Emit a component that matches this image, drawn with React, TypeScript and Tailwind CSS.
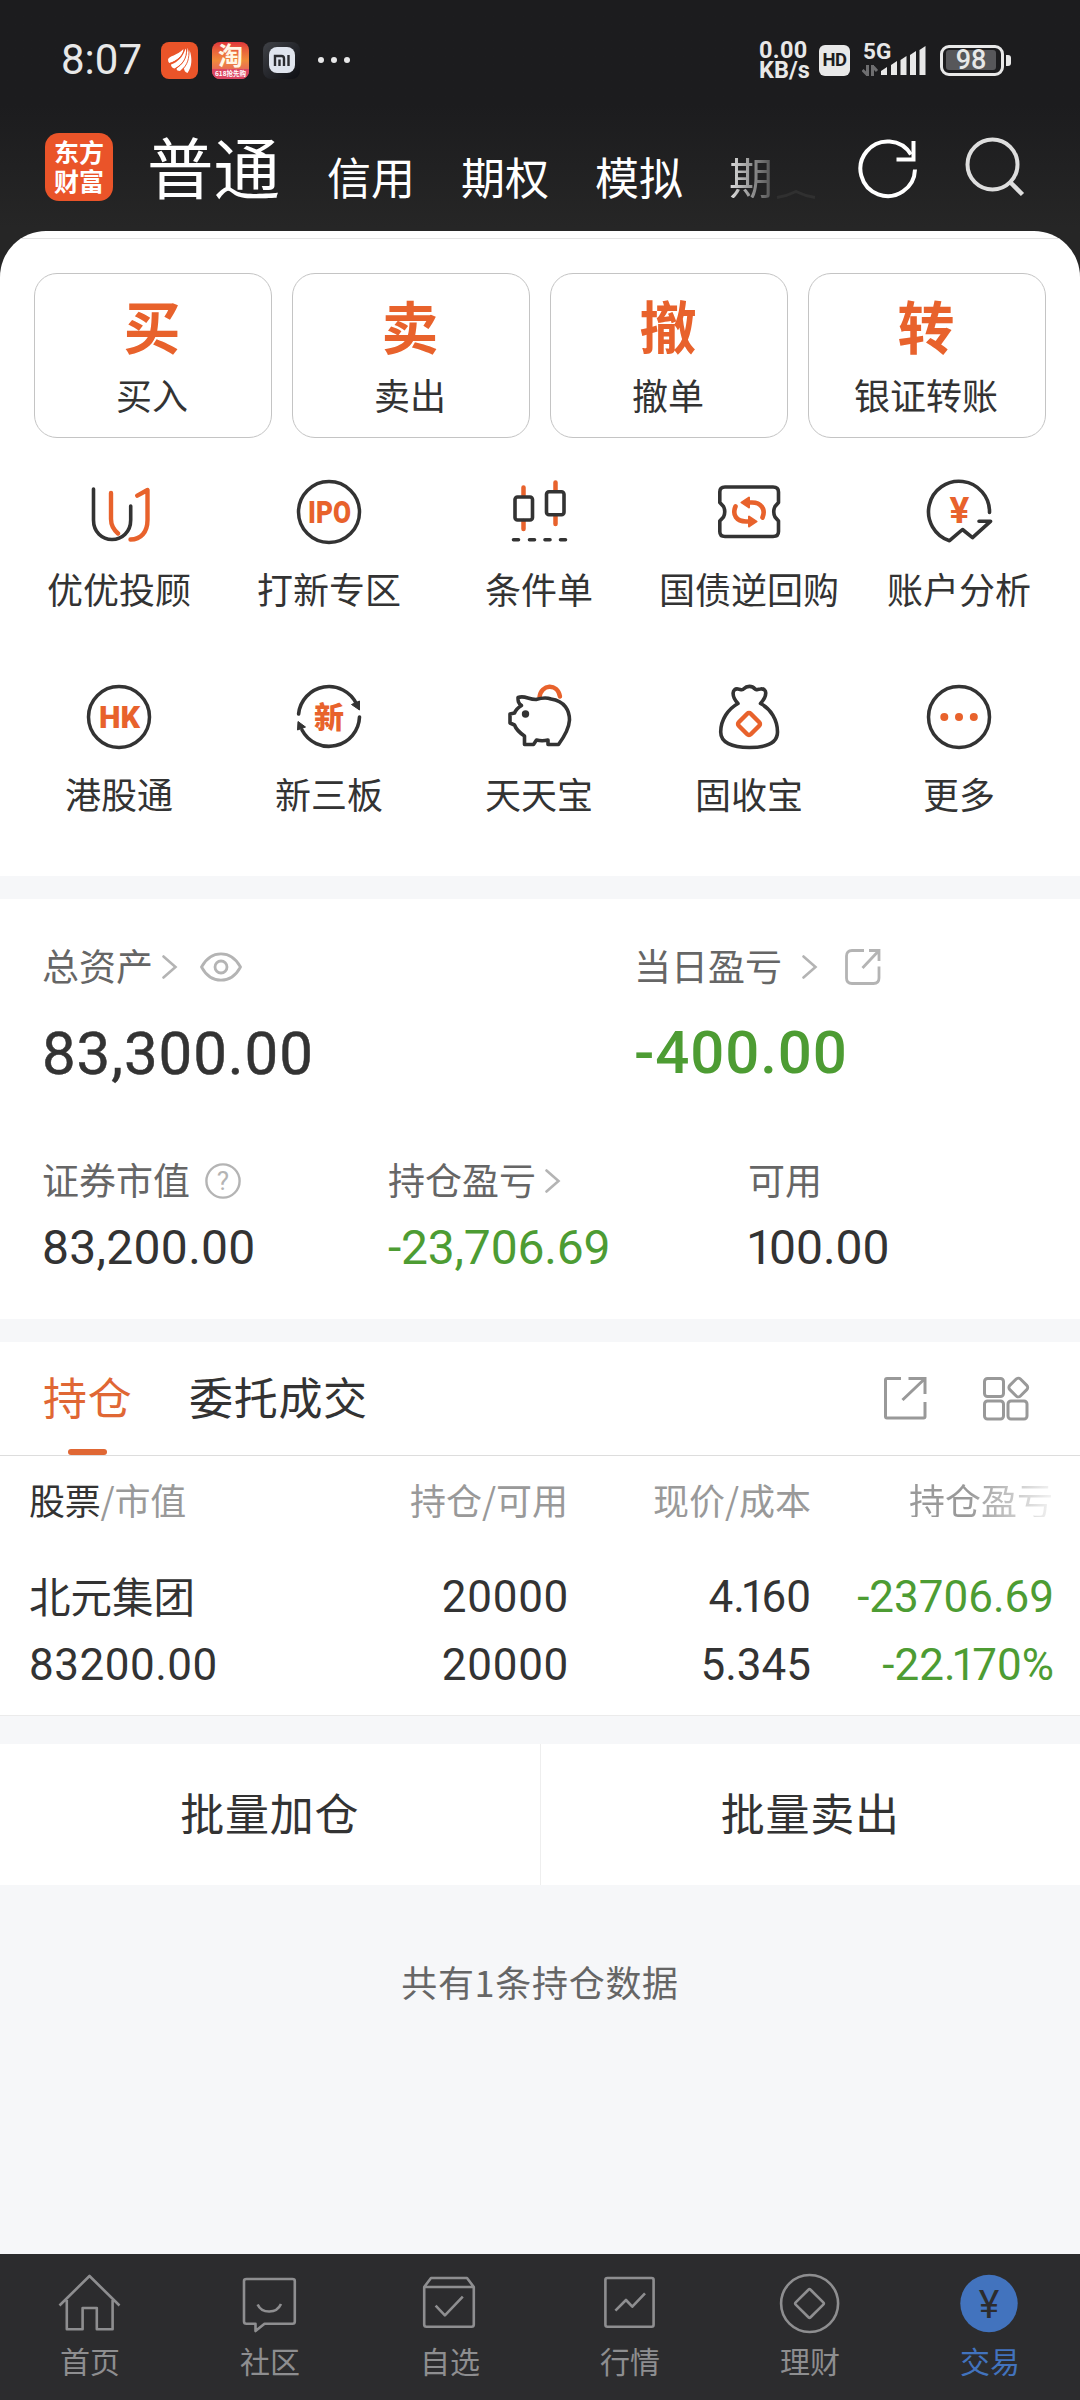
import type { ReactNode } from "react";

const CJK = "font-['Noto_Sans_CJK_SC',sans-serif]";
const NUM = "font-[Roboto,sans-serif]";

const DARK = "#333333";
const ORANGE = "#e8622c";

function StatusBar() {
  return (
    <div className="flex h-[120px] items-center pl-[61px] pr-[69px] text-[#e8e8e8]">
      <span className={`${NUM} w-[100px] text-[42px] leading-[42px]`}>8:07</span>
      <svg className="mr-[14px] h-[37px] w-[37px]" viewBox="0 0 37 37">
        <rect width="37" height="37" rx="8" fill="#ea5429" />
        <path d="M7 17.500C8 14 16 13.500 22.500 7C23 13 15 19.500 8.500 21Q7 20 7 17.500Z" fill="#fff" />
        <path d="M10 22.500C17 20 22 15 24.500 6.500C27.500 12 23 22 13.500 26.500Q10 25.500 10 22.500Z" fill="#fff" />
        <path d="M15.500 26.500C22 22 26 16 26.500 6C31 13 28 23 19 29Q15.500 29 15.500 26.500Z" fill="#fff" />
        <path d="M23 26C26 22 28.500 17 28.500 8C31.500 16 31 25 26.500 31Q23 30 23 26Z" fill="#fff" />
        <path d="M8.500 21.600C16 19 21 15 23.500 7M14 27C22 22 25.500 17 25.700 7M19.500 29C27 23 28.500 16 27.700 7" stroke="#ea5429" strokeWidth="0.900" fill="none" />
      </svg>
      <div className="mr-[14px] flex h-[37px] w-[37px] flex-col overflow-hidden rounded-[8px] bg-linear-to-b from-[#e0353a] via-[#f08a3a] to-[#dc4763]">
        <span className={`${CJK} h-[27px] text-center text-[25px] font-bold leading-[25px] text-[#fff6e6]`}>淘</span>
        <span className={`${CJK} h-[10px] whitespace-nowrap bg-[#dc4763] text-center text-[6.500px] font-bold leading-[9px] text-white`}>
          618抢先购
        </span>
      </div>
      <div className="mr-[18px] flex h-[37px] w-[37px] items-center justify-center rounded-[8px] bg-linear-to-br from-[#404247] to-[#0e0f14]">
        <svg className="h-[26px] w-[26px]" viewBox="0 0 26 26">
          <rect width="26" height="26" rx="8" fill="#dfe4ee" />
          <path d="M6 19V9h6.500a2.500 2.500 0 0 1 2.500 2.500V19M10.500 12.500v6.500M19.500 8v11" stroke="#2a2b30" strokeWidth="2.400" fill="none" />
        </svg>
      </div>
      <div className="flex gap-[7px]">
        <i className="h-[6px] w-[6px] rounded-full bg-[#e8e8e8]" />
        <i className="h-[6px] w-[6px] rounded-full bg-[#e8e8e8]" />
        <i className="h-[6px] w-[6px] rounded-full bg-[#e8e8e8]" />
      </div>

      <div className={`${NUM} ml-auto w-[60px] text-[23.500px] font-bold leading-[20px]`}>
        <div className="tracking-[0.300px]">0.00</div>
        <div>KB/s</div>
      </div>
      <div className={`${NUM} mr-[12px] flex h-[31px] w-[31px] items-center justify-center rounded-[6px] bg-[#e8e8e8] text-[18.500px] font-bold leading-[18px] tracking-[-0.500px] text-[#1c1c1e]`}>
        HD
      </div>
      <svg className="mr-[14px] h-[36px] w-[64px]" viewBox="0 0 64 36">
        <text x="1" y="17" fontFamily="Roboto" fontWeight="700" fontSize="22.500" fill="#e8e8e8">5G</text>
        <path d="M5.500 23v11M5.500 33l-5-5M10.500 34V23M10.500 24l4.500 5" stroke="#6e6e70" strokeWidth="3" fill="none" />
        <path d="M19 33v-4l6-4v8zM29 33V23l6-4v14zM38.500 33V18l6-4v19zM48 33V13l6-4v24zM57.500 33V8l6-4v29z" fill="#e8e8e8" />
      </svg>
      <div className={`${NUM} flex h-[31px] w-[64px] items-center rounded-[9px] border-[3px] border-[#e8e8e8] p-[3px]`}>
        <div className="flex h-[20px] w-[50px] items-center justify-center rounded-[3px] bg-[#57575a] text-[27px] font-medium leading-none">98</div>
      </div>
      <i className="ml-[2px] h-[11px] w-[5px] rounded-r-[3px] bg-[#e8e8e8]" />
    </div>
  );
}

function TitleBar() {
  return (
    <div className={`${CJK} flex h-[111px] items-end whitespace-nowrap pb-[30px] pl-[45px] pr-[52px] text-white`}>
      <div className="mr-[34px] h-[68px] w-[68px] rounded-[14px] bg-[#ea5429] pt-[4px] text-center text-[25px] font-bold leading-[29px]">
        东方
        <br />
        财富
      </div>
      <span className="mb-[3px] w-[180px] text-[66.500px] leading-[66px]">普通</span>
      <div className="mb-[3px] flex gap-[46px] text-[44px] leading-[44px]">
        <span>信用</span>
        <span>期权</span>
        <span>模拟</span>
        <span className="bg-linear-to-r from-[#e0e0e0] to-[#505050] bg-clip-text text-transparent">期</span>
      </div>
      <svg className="mb-[2px] ml-[3px] h-[10px] w-[40px]" viewBox="0 0 40 10">
        <path d="M1 8.500Q11 7 20 2.500Q29 7 39 8.500" stroke="#303030" strokeWidth="3" fill="none" />
      </svg>
      <svg className="ml-auto h-[64px] w-[64px]" viewBox="0 0 64 64">
        <path d="M59 32.500A27.300 27.300 0 1 1 55 17.500" stroke="#fff" strokeWidth="4" fill="none" />
        <path d="M57.500 4v18.500H40.500" stroke="#fff" strokeWidth="4" fill="none" />
      </svg>
      <svg className="ml-[44px] h-[64px] w-[64px]" viewBox="0 0 64 64">
        <circle cx="28.500" cy="27.500" r="25" stroke="#dedede" strokeWidth="4" fill="none" />
        <path d="M46 45L58.500 57.500" stroke="#dedede" strokeWidth="4.500" />
      </svg>
    </div>
  );
}

const actions = [
  { mark: "买", label: "买入" },
  { mark: "卖", label: "卖出" },
  { mark: "撤", label: "撤单" },
  { mark: "转", label: "银证转账" },
];

function Ring() {
  return <circle cx="36" cy="36" r="30.500" stroke={DARK} strokeWidth="3.500" />;
}

const shortcuts: { label: string; icon: ReactNode }[] = [
  {
    label: "优优投顾",
    icon: (
      <g strokeLinecap="round" strokeLinejoin="round">
        <path d="M10.500 13V44c0 12 8.500 19.500 18.500 19.500S47.700 56 47.700 44V30" stroke={DARK} strokeWidth="3.600" />
        <path d="M28 17V43c0 7 3 11 7 14.500M54.300 19.700L64.500 14V44c0 12-6.500 19.500-17 19.500" stroke={ORANGE} strokeWidth="4.400" />
      </g>
    ),
  },
  {
    label: "打新专区",
    icon: (
      <>
        <Ring />
        <text x="15" y="47" fontFamily="Roboto" fontWeight="900" fontSize="31" textLength="43" lengthAdjust="spacingAndGlyphs" fill={ORANGE}>
          IPO
        </text>
      </>
    ),
  },
  {
    label: "条件单",
    icon: (
      <g strokeLinecap="round">
        <path d="M20.500 11.500v8M20.500 45v8M52.500 6.500v8M52.500 40v8" stroke={ORANGE} strokeWidth="4.500" />
        <rect x="12" y="21" width="17.500" height="23" rx="2.500" stroke={DARK} strokeWidth="3.600" />
        <rect x="43.500" y="15.700" width="17.500" height="23" rx="2.500" stroke={DARK} strokeWidth="3.600" />
        <path d="M10.500 63.700h5M26.500 63.700h5M42 63.700h5M57.500 63.700h5" stroke={DARK} strokeWidth="3.600" />
      </g>
    ),
  },
  {
    label: "国债逆回购",
    icon: (
      <>
        <path
          d="M12 11H60Q65.500 11 65.500 16V26.500L62 30.500Q59.500 35.700 62 41L65.500 45V55.500Q65.500 60.500 60 60.500H12Q6.800 60.500 6.800 55.500V45L10.500 41Q13 35.700 10.500 30.500L6.800 26.500V16Q6.800 11 12 11Z"
          stroke={DARK}
          strokeWidth="3.600"
          strokeLinejoin="round"
        />
        <path d="M34 26.500h5C48 26.500 53 33 49.500 41.500M38 45.500h-5C23.500 45.500 19 39 22.500 30.500" stroke={ORANGE} strokeWidth="4.600" strokeLinecap="round" />
        <path d="M28.500 26.500l7.500-5v10zM43.500 45.500l-7.500-5v10z" fill={ORANGE} stroke={ORANGE} strokeWidth="2" strokeLinejoin="round" />
      </>
    ),
  },
  {
    label: "账户分析",
    icon: (
      <>
        <path
          d="M66.500 36.500A30.500 30.500 0 1 0 26.500 64.700L39.500 53.500L49.500 61.700L67.500 45.300H56"
          stroke={DARK}
          strokeWidth="3.600"
          strokeLinecap="round"
          strokeLinejoin="round"
        />
        <text x="36.300" y="46.500" textAnchor="middle" fontFamily="Roboto" fontWeight="700" fontSize="37" fill={ORANGE}>¥</text>
      </>
    ),
  },
  {
    label: "港股通",
    icon: (
      <>
        <Ring />
        <text x="16" y="47" fontFamily="Roboto" fontWeight="900" fontSize="31" textLength="41" lengthAdjust="spacingAndGlyphs" fill={ORANGE}>
          HK
        </text>
      </>
    ),
  },
  {
    label: "新三板",
    icon: (
      <>
        <path d="M5.600 33A30.500 30.500 0 0 1 63.500 23M66.500 36A30.500 30.500 0 0 1 9 49" stroke={DARK} strokeWidth="3.600" strokeLinecap="round" />
        <path d="M58.500 23.500l8-3.500v9zM5 40.500l7.500 5.500l-8 3z" fill={DARK} stroke={DARK} strokeLinejoin="round" />
        <text x="36" y="46.500" textAnchor="middle" fontFamily="Noto Sans CJK SC" fontWeight="900" fontSize="30" fill={ORANGE}>新</text>
      </>
    ),
  },
  {
    label: "天天宝",
    icon: (
      <>
        <path d="M36.500 16C38 3 54.500 2 57 15.500" stroke={ORANGE} strokeWidth="4.400" strokeLinecap="round" />
        <path
          d="M15 16.500C22 14 25 18.500 33 18.500C38 17 44 16.500 48 18C62 20 66.500 30 66.500 39C66 48 61 56 55.500 63.500H45V59Q39 60.500 33.500 59L30.500 63.500H21.500V55C17 52 13 48 11.500 44L7 42V33L11.500 32Q13 28 18.500 24.500C15 22 15 20 15 16.500Z"
          stroke={DARK}
          strokeWidth="3.600"
          strokeLinejoin="round"
        />
        <circle cx="22.500" cy="33" r="3.700" fill={DARK} />
      </>
    ),
  },
  {
    label: "固收宝",
    icon: (
      <>
        <path
          d="M25 22.500C18 15 19 7 25 8C28 8.500 29.500 9.500 30.500 8C34 4.500 39 4.500 42 8C43 9.500 44.500 8 47.500 8C54.500 7 54.500 15 47.500 22.500C58 28 64.500 39 64.500 51C64.500 61.500 54 66.500 36.300 66.500S7.700 61.500 7.700 51C7.700 39 15 28 25 22.500Z"
          stroke={DARK}
          strokeWidth="3.600"
          strokeLinejoin="round"
        />
        <rect x="27.500" y="34.500" width="17" height="17" rx="2.500" transform="rotate(45 36 43)" stroke={ORANGE} strokeWidth="4.400" />
      </>
    ),
  },
  {
    label: "更多",
    icon: (
      <>
        <Ring />
        <circle cx="21.300" cy="36" r="4" fill={ORANGE} />
        <circle cx="36" cy="36" r="4" fill={ORANGE} />
        <circle cx="50.800" cy="36" r="4" fill={ORANGE} />
      </>
    ),
  },
];

function Chevron({ className }: { className?: string }) {
  return (
    <svg className={`h-[24px] w-[16px] ${className ?? ""}`} viewBox="0 0 16 24" fill="none">
      <path d="M1.500 1.500L13.500 12L1.500 22.500" stroke="#b4b4b4" strokeWidth="2.600" strokeLinecap="round" />
    </svg>
  );
}

function Assets() {
  return (
    <section className="h-[420px] bg-white pl-[42px] pt-[48px] text-[37px] text-[#666666]">
      <div className="grid h-[136px] grid-cols-[592px_1fr] grid-rows-[40px_96px]">
        <div className="flex items-center leading-[40px]">
          <span className="pb-[5px]">总资产</span>
          <Chevron className="ml-[9px]" />
          <svg className="ml-[22px] h-[30px] w-[42px]" viewBox="0 0 42 30" fill="none" stroke="#b4b4b4" strokeWidth="2.800">
            <path d="M1.500 15C11-2.500 31-2.500 40.500 15C31 32.500 11 32.500 1.500 15Z" strokeLinejoin="round" />
            <circle cx="21" cy="15" r="6" />
          </svg>
        </div>
        <div className="flex items-center leading-[40px]">
          <span className="pb-[5px]">当日盈亏</span>
          <Chevron className="ml-[20px]" />
          <svg className="ml-[27px] h-[36px] w-[36px]" viewBox="0 0 36 36" fill="none" stroke="#b4b4b4" strokeWidth="2.800">
            <path d="M19 1.500H7Q1.500 1.500 1.500 7V29Q1.500 34.500 7 34.500H28.500Q34 34.500 34 29V17.500M17.500 19L33.500 2M24 1.500H34V12" />
          </svg>
        </div>
        <div className={`${NUM} pt-[37px] text-[60px] leading-[60px] tracking-[0.900px] text-[#333333] [-webkit-text-stroke:0.500px_#333333]`}>83,300.00</div>
        <div className={`${NUM} pt-[36px] text-[60px] font-medium leading-[60px] tracking-[0.900px] text-[#4d9c33]`}>-400.00</div>
      </div>
      <div className="mt-[78px] grid grid-cols-[346px_360px_1fr] grid-rows-[40px_auto]">
        <div className="flex items-center leading-[40px]">
          <span className="pb-[4px]">证券市值</span>
          <svg className="ml-[15px] h-[36px] w-[36px]" viewBox="0 0 36 36" fill="none">
            <circle cx="18" cy="18" r="16.600" stroke="#b4b4b4" strokeWidth="2.400" />
            <text x="18" y="27" textAnchor="middle" fontFamily="Roboto" fontSize="26" fill="#b4b4b4">?</text>
          </svg>
        </div>
        <div className="flex items-center leading-[40px]">
          <span className="pb-[4px]">持仓盈亏</span>
          <Chevron className="ml-[9px]" />
        </div>
        <div className="flex items-center leading-[40px]">
          <span className="pb-[4px]">可用</span>
        </div>
        <div className={`${NUM} pt-[23px] text-[48px] leading-[48px] tracking-[0.300px] text-[#333333]`}>83,200.00</div>
        <div className={`${NUM} pt-[23px] text-[48px] leading-[48px] tracking-[-0.200px] text-[#4d9c33]`}>-23,706.69</div>
        <div className={`${NUM} -ml-[2px] pt-[23px] text-[48px] leading-[48px] text-[#333333]`}>
          <span className="tracking-[-4px]">1</span>00.00
        </div>
      </div>
    </section>
  );
}

function Positions() {
  return (
    <section className="bg-white text-[#333333]">
      <div className="flex h-[114px] border-b border-[#dddddd] pl-[43px] pr-[50px] text-[44px] leading-[44px] tracking-[0.700px]">
        <div className="flex w-[146px] flex-col pt-[32px] text-[#e06734]">
          <span>持仓</span>
          <i className="ml-[25px] mt-[31px] h-[6px] w-[39px] rounded-full bg-[#e06734]" />
        </div>
        <span className="pt-[32px]">委托成交</span>
        <svg className="ml-auto mt-[34px] h-[44px] w-[44px]" viewBox="0 0 44 44" fill="none" stroke="#999999" strokeWidth="3">
          <path d="M18 2.500H4Q2.500 2.500 2.500 4V40.500Q2.500 42 4 42H40.500Q42 42 42 40.500V26M19.500 24L41 3.500M25.500 2.500H42V18" />
        </svg>
        <svg className="ml-[55px] mt-[34px] h-[46px] w-[48px]" viewBox="0 0 48 46" fill="none" stroke="#999999" strokeWidth="3">
          <rect x="2.500" y="2.500" width="19" height="18" rx="3" />
          <rect x="2.500" y="25" width="19" height="18" rx="3" />
          <rect x="26" y="25" width="19" height="18" rx="3" />
          <rect x="28.800" y="4" width="15" height="15" rx="3" transform="rotate(45 36.300 11.500)" />
        </svg>
      </div>
      <div className="h-[259px] pl-[29px] pt-[25px]">
        <div className="grid grid-cols-[338px_201px_243px_242px] text-right text-[36px] leading-[36px] text-[#999999]">
          <span className="text-left tracking-[-0.200px]">
            <span className="text-[#333333]">股票</span>/市值
          </span>
          <span>持仓/可用</span>
          <span>现价/成本</span>
          <span className="bg-linear-to-r from-[#999999] from-65% to-[#f4f4f4] bg-clip-text text-transparent">持仓盈亏</span>
        </div>
        <div className={`${NUM} mt-[56px] grid grid-cols-[339px_201px_242px_243px] gap-y-[20px] text-right text-[44px] leading-[48px]`}>
          <span className={`${CJK} -mt-[2px] text-left text-[41.500px]`}>北元集团</span>
          <span className="tracking-[0.700px]">20000</span>
          <span>
            4.<span className="ml-[-4px] tracking-[-4px]">1</span>60
          </span>
          <span className="text-[#4d9c33]">-23706.69</span>
          <span className="text-left tracking-[0.500px]">83200.00</span>
          <span className="tracking-[0.700px]">20000</span>
          <span>5.345</span>
          <span className="text-[#4d9c33]">
            -22.<span className="ml-[-4px] tracking-[-4px]">1</span>70%
          </span>
        </div>
      </div>
    </section>
  );
}

const tabs: { label: string; icon: ReactNode }[] = [
  {
    label: "首页",
    icon: <path d="M1.500 34.500L31.500 5L61.500 34.500M8.800 29V58.300H24.600V37H38.800V58.300H54.600V29" />,
  },
  {
    label: "社区",
    icon: (
      <>
        <path d="M8.500 8H54.500Q56.800 8 56.800 10V50.500Q56.800 52.700 54.500 52.700H26.500L17.500 60V52.700H8.500Q6 52.700 6 50.500V10Q6 8 8.500 8Z" />
        <path d="M19.600 33.500C24 43 38.500 43 43 33" />
      </>
    ),
  },
  {
    label: "自选",
    icon: <path d="M6.200 16L13 7H49L55.800 16M6.200 16H55.800V53.500Q55.800 55.700 53.500 55.700H8.500Q6.200 55.700 6.200 53.500ZM17.600 34.700L26.900 44.300L44.800 25.700" />,
  },
  {
    label: "行情",
    icon: (
      <>
        <rect x="7.400" y="7" width="48.200" height="48.700" rx="2" />
        <path d="M17.400 39.700L28 29L34.300 35.700L47 22.300" />
      </>
    ),
  },
  {
    label: "理财",
    icon: (
      <>
        <circle cx="31.600" cy="32.500" r="28.500" />
        <rect x="21" y="22" width="21" height="21" rx="1.500" transform="rotate(45 31.500 32.500)" />
      </>
    ),
  },
  {
    label: "交易",
    icon: (
      <>
        <circle cx="31" cy="32.500" r="28.700" fill="#4273be" stroke="none" />
        <text x="31" y="47" textAnchor="middle" fontFamily="Roboto" fontSize="39" fill="#2c2c2e" stroke="none">¥</text>
      </>
    ),
  },
];

export default function App() {
  return (
    <div className={`${CJK} flex h-[2400px] w-[1080px] flex-col overflow-hidden bg-[#f6f7f9]`}>
      <div className="bg-linear-to-b from-[#1c1c1e] from-12% to-[#262626] to-26%">
        <StatusBar />
        <TitleBar />
        <main className="h-[645px] overflow-hidden rounded-t-[46px] bg-white text-[36px] leading-[36px] text-[#333333]">
          <div className="h-[42px] pt-[7px]">
            <div className="h-px bg-[#e4e4e4]" />
          </div>
          <div className="grid grid-cols-4 gap-[20px] px-[34px]">
            {actions.map((a) => (
              <div key={a.label} className="flex h-[165px] flex-col items-center rounded-[23px] border border-[#c4c4c4] pr-[2px] pt-[21px]">
                <span className="text-[57px] font-bold leading-[58px] text-[#e8622c]">{a.mark}</span>
                <span className="mt-[23px]">{a.label}</span>
              </div>
            ))}
          </div>
          <div className="mt-[38px] grid grid-cols-5 gap-y-[75px] pl-[14px] pr-[16px]">
            {shortcuts.map((s) => (
              <div key={s.label} className="flex flex-col items-center">
                <svg className="h-[72px] w-[72px]" viewBox="0 0 72 72" fill="none">
                  {s.icon}
                </svg>
                <span className="mt-[22px] whitespace-nowrap">{s.label}</span>
              </div>
            ))}
          </div>
        </main>
      </div>

      <div className="h-[23px] shrink-0" />
      <Assets />
      <div className="h-[23px] shrink-0" />
      <Positions />

      <div className="border-t border-[#ebebeb] pt-[28px]">
        <div className="flex h-[141px] bg-white text-[44px] leading-[44px] tracking-[0.700px] text-[#333333]">
          <div className="flex-1 border-r border-[#eeeeee] pt-[46px] text-center">批量加仓</div>
          <div className="flex-1 pt-[46px] text-center">批量卖出</div>
        </div>
      </div>
      <p className="mt-[78px] text-center text-[36px] leading-[36px] tracking-[0.700px] text-[#666666]">共有1条持仓数据</p>

      <nav className="mt-auto grid h-[146px] grid-cols-6 bg-[#2c2c2e] pt-[17px] text-[30px] leading-[30px] text-[#8e8e90]">
        {tabs.map((t) => (
          <div key={t.label} className={`flex flex-col items-center ${t.label === "交易" ? "text-[#4273be]" : ""}`}>
            <svg className="h-[64px] w-[64px]" viewBox="0 0 64 64" fill="none" stroke="currentColor" strokeWidth="2.600" strokeLinejoin="round">
              {t.icon}
            </svg>
            <span className="mt-[10px]">{t.label}</span>
          </div>
        ))}
      </nav>
    </div>
  );
}
